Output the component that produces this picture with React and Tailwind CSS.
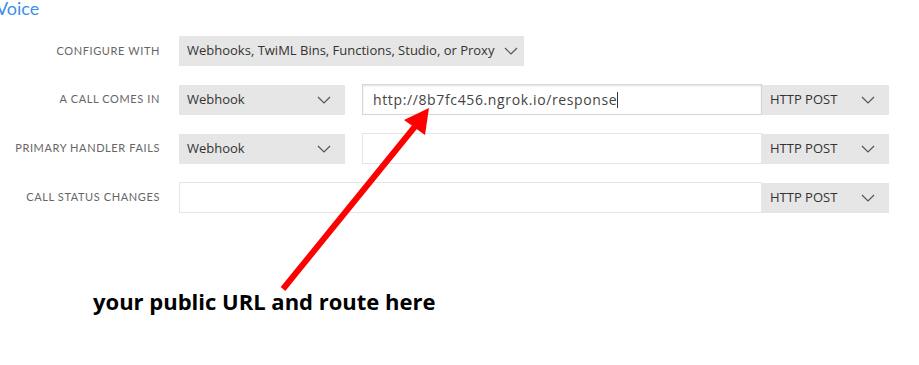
import React from 'react';

const Chevron = () => (
  <svg width="14" height="8" viewBox="0 0 14 8" className="shrink-0" fill="none" stroke="#555" strokeWidth="1.2">
    <path d="M1 1l6 6 6-6" />
  </svg>
);

const Label = ({ children }) => (
  <div className="w-[179px] shrink-0 pr-[19px] text-right text-[11px] tracking-[0.055em] text-[#666] uppercase whitespace-nowrap">
    {children}
  </div>
);

const Select = ({ value, width, compact }) => (
  <div
    className={`${width} h-[30px] shrink-0 bg-[#e6e6e6] flex items-center pl-[8px] text-[13px] text-[#333] whitespace-nowrap ${compact ? 'gap-[10px] pr-[6px]' : 'justify-between pr-[14px]'}`}
    style={{ fontFamily: '"Open Sans", Lato, sans-serif' }}
  >
    <span>{value}</span>
    <Chevron />
  </div>
);

const Input = ({ value, width, focused }) => (
  <div
    className={`${width} h-[31px] shrink-0 bg-white border flex items-center pl-[10px] text-[14px] tracking-[0.045em] text-[#444] whitespace-nowrap ${focused ? 'shadow-[inset_0_1px_2px_rgba(0,0,0,0.12)] border-[#d6d6d6]' : 'border-[#e6e6e6]'}`}
    style={{ fontFamily: '"Open Sans", Lato, sans-serif' }}
  >
    {value}
    {focused && <span className="w-px h-[16px] bg-[#333]" />}
  </div>
);

export default function App() {
  return (
    <div className="relative w-[919px] h-[365px] bg-white overflow-hidden" style={{ fontFamily: 'Lato, "Open Sans", sans-serif' }}>
      <div className="ml-[-4px] mt-[-4px] text-[18px] text-[#3d8fe8] leading-[24px]">Voice</div>

      <div className="mt-[16px] flex flex-col gap-[18px]">
        <div className="flex items-center">
          <Label>Configure with</Label>
          <Select value="Webhooks, TwiML Bins, Functions, Studio, or Proxy" width="w-auto" compact />
        </div>
        <div className="flex items-center">
          <Label>A call comes in</Label>
          <Select value="Webhook" width="w-[166px]" />
          <div className="w-[17px]" />
          <Input value="http://8b7fc456.ngrok.io/response" width="w-[400px]" focused />
          <Select value="HTTP POST" width="w-[127px]" />
        </div>
        <div className="flex items-center">
          <Label>Primary handler fails</Label>
          <Select value="Webhook" width="w-[166px]" />
          <div className="w-[17px]" />
          <Input value="" width="w-[400px]" />
          <Select value="HTTP POST" width="w-[127px]" />
        </div>
        <div className="flex items-center">
          <Label>Call status changes</Label>
          <Input value="" width="w-[583px]" />
          <Select value="HTTP POST" width="w-[127px]" />
        </div>
      </div>

      <div
        className="mt-[74px] ml-[93px] text-[22px] font-bold text-black leading-[28px] whitespace-nowrap"
        style={{ fontFamily: '"Open Sans", Lato, sans-serif' }}
      >
        your public URL and route here
      </div>

      <svg className="absolute left-0 top-0 pointer-events-none" width="919" height="365">
        <line x1="283" y1="289" x2="417" y2="124" stroke="#ff0000" strokeWidth="6" />
        <polygon points="429,108 404,120 425,135" fill="#ff0000" />
      </svg>
    </div>
  );
}
